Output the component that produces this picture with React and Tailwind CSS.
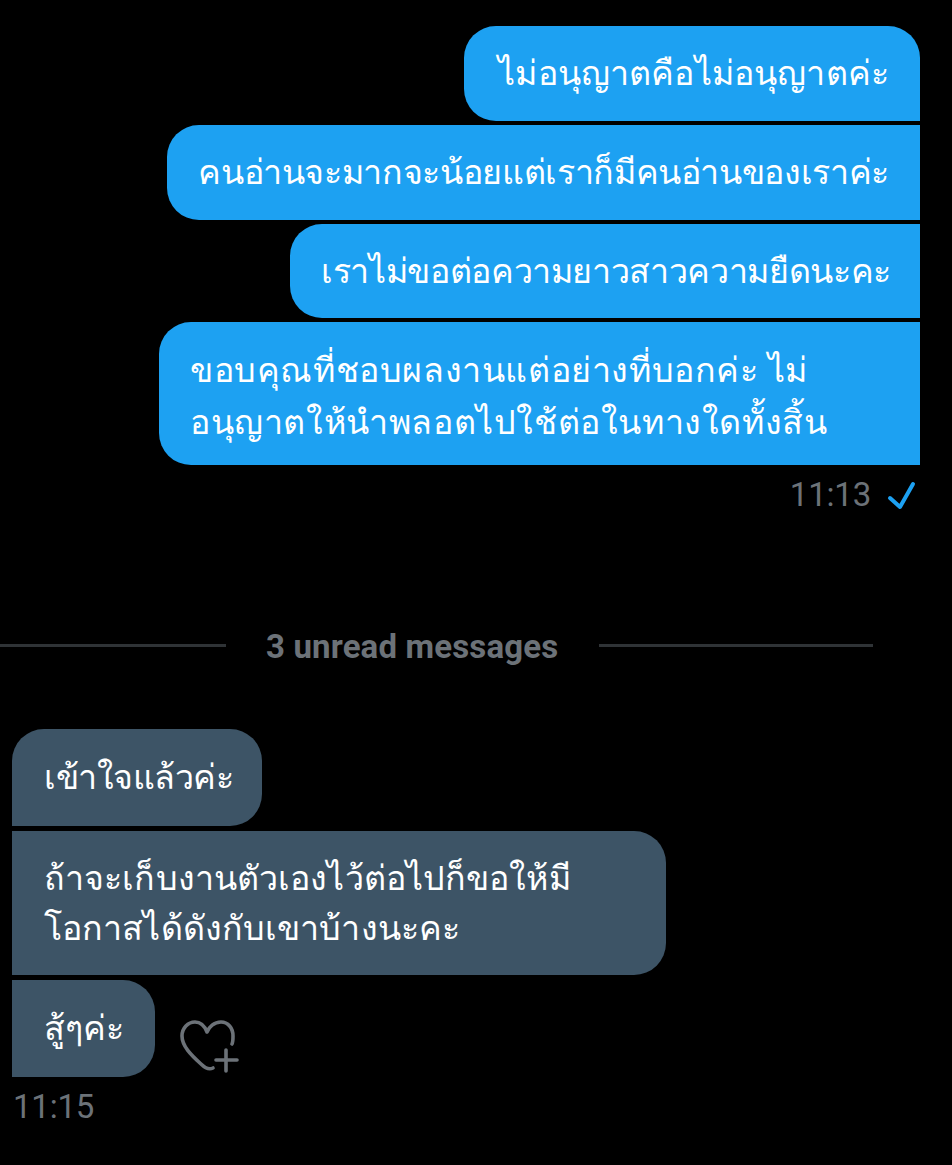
import React from 'react';

const FONT = "font-['Roboto','Noto_Sans','Liberation_Sans',sans-serif]";

function Sent({ className, children }) {
    return (
        <div className={`bg-[#1da1f2] text-white text-[34px] font-medium whitespace-nowrap px-[31px] rounded-l-[32px] ${className}`}>
            {children}
        </div>
    );
}

function Received({ className, children }) {
    return (
        <div className={`bg-[#3d5466] text-white text-[34px] font-medium leading-[50px] whitespace-nowrap pl-[32px] rounded-r-[32px] ${className}`}>
            {children}
        </div>
    );
}

export default function App() {
    return (
        <div className={`w-[952px] h-[1165px] bg-black overflow-hidden flex flex-col ${FONT}`}>
            <div className="flex flex-col items-end gap-[4px] pt-[26px] pr-[32px]">
                <Sent className="w-[456px] h-[95px] leading-[95px] rounded-tr-[32px] text-right tracking-[0.15px]">ไม่อนุญาตคือไม่อนุญาตค่ะ</Sent>
                <Sent className="w-[753px] h-[95px] leading-[95px] text-right tracking-[-0.35px]">คนอ่านจะมากจะน้อยแต่เราก็มีคนอ่านของเราค่ะ</Sent>
                <Sent className="w-[630px] h-[94px] leading-[94px] text-right tracking-[-0.35px]">เราไม่ขอต่อความยาวสาวความยืดนะคะ</Sent>
                <Sent className="w-[761px] h-[143px] leading-[52px] pt-[22px] tracking-[0.6px]">
                    ขอบคุณที่ชอบผลงานแต่อย่างที่บอกค่ะ ไม่<br />อนุญาตให้นำพลอตไปใช้ต่อในทางใดทั้งสิ้น
                </Sent>
            </div>

            <div className="flex items-center justify-end gap-[16px] mt-[11px] pr-[35px] h-[38px]">
                <span className="text-[#6c7278] text-[33px] leading-[38px] tracking-[-0.2px]">11:13</span>
                <svg width="30" height="30" viewBox="0 0 30 30" fill="none" stroke="#1da1f2" strokeWidth="4" strokeLinecap="round" strokeLinejoin="round">
                    <path d="M3 18 L13 27 L26 4" />
                </svg>
            </div>

            <div className="flex items-center mt-[108px] h-[46px] w-[873px]">
                <div className="w-[226px] h-[3px] bg-[#2f3336]" />
                <span className="ml-[40px] w-[293px] pt-[4px] text-[#6c7278] text-[33px] leading-[46px] font-bold tracking-[0.15px] whitespace-nowrap">3 unread messages</span>
                <div className="ml-[40px] flex-1 h-[3px] bg-[#2f3336]" />
            </div>

            <div className="flex flex-col items-start gap-[5px] mt-[61px] pl-[12px]">
                <Received className="w-[250px] h-[97px] leading-[97px] rounded-tl-[32px] tracking-[-0.5px]">เข้าใจแล้วค่ะ</Received>
                <Received className="w-[654px] h-[144px] pt-[22px] tracking-[0.1px]">
                    ถ้าจะเก็บงานตัวเองไว้ต่อไปก็ขอให้มี<br />โอกาสได้ดังกับเขาบ้างนะคะ
                </Received>
                <div className="flex items-end">
                    <Received className="w-[143px] h-[97px] leading-[97px]">สู้ๆค่ะ</Received>
                    <svg className="ml-[24px] mb-[3px]" width="60" height="56" viewBox="0 0 60 56" fill="none" stroke="#6c7278" strokeWidth="3.6" strokeLinecap="round" strokeLinejoin="round">
                        <path d="M34 50 C30 52 26 50 22 46 C12 37 3 28 3 18 C3 10 9 4 16 4 C22 4 26 9 28 14 C30 9 35 4 42 4 C49 4 54 10 54 18 C54 21 54 24 53 26" />
                        <path d="M47 32 V53 M37 42 H58" />
                    </svg>
                </div>
            </div>

            <div className="pl-[13px] mt-[11px] text-[#6c7278] text-[33px] leading-[38px] tracking-[-0.2px]">11:15</div>
        </div>
    );
}
